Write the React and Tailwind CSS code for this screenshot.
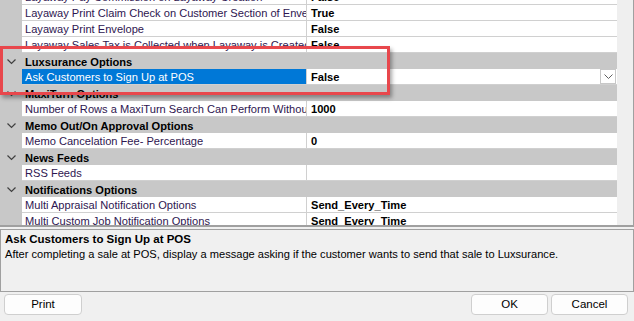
import React from "react";

const rows = [
  { name: "Layaway Pay Commission on Layaway Creation", value: "False" },
  { name: "Layaway Print Claim Check on Customer Section of Envelope", value: "True" },
  { name: "Layaway Print Envelope", value: "False" },
  { name: "Layaway Sales Tax is Collected when Layaway is Created", value: "False" },
  { category: "Luxsurance Options" },
  { name: "Ask Customers to Sign Up at POS", value: "False", selected: true },
  { category: "MaxiTurn Options" },
  { name: "Number of Rows a MaxiTurn Search Can Perform Without Warning", value: "1000" },
  { category: "Memo Out/On Approval Options" },
  { name: "Memo Cancelation Fee- Percentage", value: "0" },
  { category: "News Feeds" },
  { name: "RSS Feeds", value: "" },
  { category: "Notifications Options" },
  { name: "Multi Appraisal Notification Options", value: "Send_Every_Time" },
  { name: "Multi Custom Job Notification Options", value: "Send_Every_Time" },
  { name: "Multi Repair Notification Options", value: "Send_Every_Time" },
];

function Chevron() {
  return (
    <svg width="9" height="6" viewBox="0 0 9 6" className="block">
      <polyline points="0.5,0.5 4.5,4.5 8.5,0.5" fill="none" stroke="#404040" strokeWidth="1.2" />
    </svg>
  );
}

function Row({ row }) {
  if (row.category) {
    return (
      <div className="flex h-[16px] overflow-hidden bg-[#c8c8c8]">
        <div className="flex w-[22px] items-center justify-center pt-[2px]">
          <Chevron />
        </div>
        <span className="pl-[3px] font-bold leading-[19px] text-black">{row.category}</span>
      </div>
    );
  }
  return (
    <div className="flex h-[16px]">
      <div className="w-[22px] shrink-0 bg-[#c8c8c8]" />
      <div className="flex flex-1 border-b border-[#d0d0d0] bg-white">
        <div
          className={
            row.selected
              ? "w-[284px] shrink-0 overflow-hidden whitespace-nowrap bg-[#0078d7] pl-[3px] leading-[17px] text-white"
              : "w-[284px] shrink-0 overflow-hidden whitespace-nowrap pl-[3px] leading-[17px] text-[#2e1650]"
          }
        >
          {row.name}
        </div>
        <div className="w-px shrink-0 bg-[#d0d0d0]" />
        <div className="relative flex-1 overflow-hidden whitespace-nowrap pl-[4px] font-bold leading-[17px] text-black">
          {row.value}
          {row.selected && (
            <div className="absolute right-[1px] top-[0px] flex h-[15px] w-[16px] items-center justify-center border border-[#c8c8c8] bg-white">
              <svg width="9" height="5" viewBox="0 0 9 5">
                <polyline points="0.5,0.5 4.5,4.5 8.5,0.5" fill="none" stroke="#606060" strokeWidth="1" />
              </svg>
            </div>
          )}
        </div>
      </div>
    </div>
  );
}

function Button({ children, className }) {
  return (
    <button
      className={
        "flex h-[21px] items-center justify-center rounded-[4px] border border-[#cfcfcf] bg-[#fdfdfd] text-[11.5px] text-black " +
        className
      }
    >
      {children}
    </button>
  );
}

export default function App() {
  return (
    <div
      className="relative h-[321px] w-[634px] overflow-hidden bg-[#f0f0f0] text-[11.1px]"
      style={{ fontFamily: '"Liberation Sans", Arial, sans-serif' }}
    >
      {/* property grid */}
      <div className="flex h-[227px] border-b-2 border-r border-[#a0a0a0]">
        <div className="flex-1 overflow-hidden">
          <div className="-mt-[11px]">
            {rows.map((r, i) => (
              <Row key={i} row={r} />
            ))}
          </div>
        </div>
        <div className="w-[16px] shrink-0 bg-[#efefef]" />
      </div>

      {/* description */}
      <div className="mt-[2px] h-[63px] border border-[#a0a0a0] bg-[#f0f0f0] px-[4px] pt-[2px]">
        <div className="text-[11.5px] font-bold leading-[14px] text-black">Ask Customers to Sign Up at POS</div>
        <div className="mt-[1px] leading-[14px] text-black">
          After completing a sale at POS, display a message asking if the customer wants to send that sale to Luxsurance.
        </div>
      </div>

      {/* buttons */}
      <div className="mt-[2px] flex px-[4px]">
        <Button className="w-[78px]">Print</Button>
        <div className="flex-1" />
        <Button className="w-[77px]">OK</Button>
        <Button className="ml-[3px] w-[77px]">Cancel</Button>
        <div className="w-[2px]" />
      </div>

      {/* annotation highlight */}
      <div className="pointer-events-none absolute left-[0px] top-[46px] h-[49px] w-[390px] border-[3px] border-[#e8474c] shadow-[2px_3px_4px_rgba(0,0,0,0.35)]" />
    </div>
  );
}
